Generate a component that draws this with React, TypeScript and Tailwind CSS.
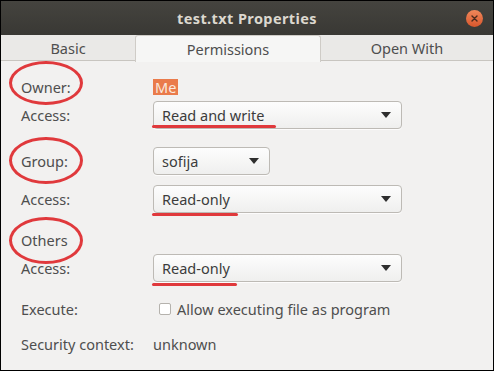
import { ReactNode } from 'react';

const font = { fontFamily: '"Noto Sans", "Open Sans", sans-serif' };

function Combo({ value, width }: { value: string; width: string }) {
  return (
    <div
      className={`${width} h-[28px] flex items-center justify-between pl-[8px] pr-[10px] rounded-[4px] border border-[#bdbab5] bg-gradient-to-b from-[#fdfdfd] to-[#efefee] text-[#3c3c3c] shadow-[0_1px_0_rgba(255,255,255,0.8)]`}
    >
      <span>{value}</span>
      <svg width="10" height="6" viewBox="0 0 10 6">
        <path d="M0 0 L10 0 L5 6 Z" fill="#2e2e2e" />
      </svg>
    </div>
  );
}

function Row({ label, children, className }: { label: string; children?: ReactNode; className: string }) {
  return (
    <div className={`flex items-center ${className}`}>
      <div className="w-[132px] shrink-0 text-[#4e4e4e]">{label}</div>
      {children}
    </div>
  );
}

export default function App() {
  return (
    <div
      className="relative w-[494px] h-[371px] overflow-hidden border border-black bg-[#f2f1f0] text-[14.5px] leading-none"
      style={font}
    >
      {/* Title bar */}
      <div className="relative h-[34px] flex items-center justify-center bg-gradient-to-b from-[#45443f] to-[#393834]">
        <span className="font-bold text-[14.5px] text-[#dcd8cf] tracking-[0.4px]">test.txt Properties</span>
        <div className="absolute right-[10px] top-[9px] w-[17px] h-[17px] rounded-full bg-gradient-to-b from-[#f0875a] to-[#d8562b] flex items-center justify-center">
          <svg width="7" height="7" viewBox="0 0 7 7">
            <path d="M1 1 L6 6 M6 1 L1 6" stroke="#4a2a1c" strokeWidth="1.4" strokeLinecap="round" />
          </svg>
        </div>
      </div>

      {/* Tabs */}
      <div className="h-[26px] flex bg-[#eae9e7] border-b border-[#c8c5c0] text-[#4e4e4e]">
        <div className="w-[134px] flex items-center justify-center pt-[1px]">Basic</div>
        <div className="w-[186px] h-[27px] -mb-[1px] flex items-center justify-center pt-[1px] bg-[#f6f6f5] border-x border-t border-[#cfccc7] rounded-t-[3px]">
          Permissions
        </div>
        <div className="flex-1 flex items-center justify-center pt-[1px]">Open With</div>
      </div>

      {/* Content */}
      <div className="flex flex-col pl-[20px]">
        <Row label="Owner:" className="h-[26px] mt-[13px]">
          <span className="px-[2px] py-[1px] bg-[#ea7b4b] text-[#fbe9df]">Me</span>
        </Row>
        <Row label="Access:" className="h-[28px] mt-[1px]">
          <Combo value="Read and write" width="w-[249px]" />
        </Row>
        <Row label="Group:" className="h-[28px] mt-[18px]">
          <Combo value="sofija" width="w-[117px]" />
        </Row>
        <Row label="Access:" className="h-[28px] mt-[10px]">
          <Combo value="Read-only" width="w-[249px]" />
        </Row>
        <Row label="Others" className="h-[26px] mt-[14px]" />
        <Row label="Access:" className="h-[28px] mt-[1px]">
          <Combo value="Read-only" width="w-[249px]" />
        </Row>
        <Row label="Execute:" className="h-[26px] mt-[14px]">
          <div className="flex items-center gap-[6px] pl-[6px] text-[#4e4e4e]">
            <div className="w-[12px] h-[12px] rounded-[2px] border border-[#b5b2ad] bg-white" />
            <span>Allow executing file as program</span>
          </div>
        </Row>
        <div className="flex items-center h-[26px] mt-[9px] text-[#4e4e4e]">
          <div className="w-[132px] shrink-0">Security context:</div>
          <span>unknown</span>
        </div>
      </div>

      {/* Annotations */}
      <div className="absolute left-[8px] top-[60px] w-[74px] h-[44px] rounded-[50%] border-[3px] border-[#e0393c]" />
      <div className="absolute left-[8px] top-[136px] w-[74px] h-[47px] rounded-[50%] border-[3px] border-[#e0393c]" />
      <div className="absolute left-[8px] top-[216px] w-[74px] h-[47px] rounded-[50%] border-[3px] border-[#e0393c]" />
      <div className="absolute left-[151px] top-[124px] w-[124px] h-[3px] rounded-full bg-[#e0393c]" />
      <div className="absolute left-[151px] top-[212px] w-[86px] h-[3px] rounded-full bg-[#e0393c]" />
      <div className="absolute left-[151px] top-[282px] w-[85px] h-[3px] rounded-full bg-[#e0393c]" />
    </div>
  );
}
